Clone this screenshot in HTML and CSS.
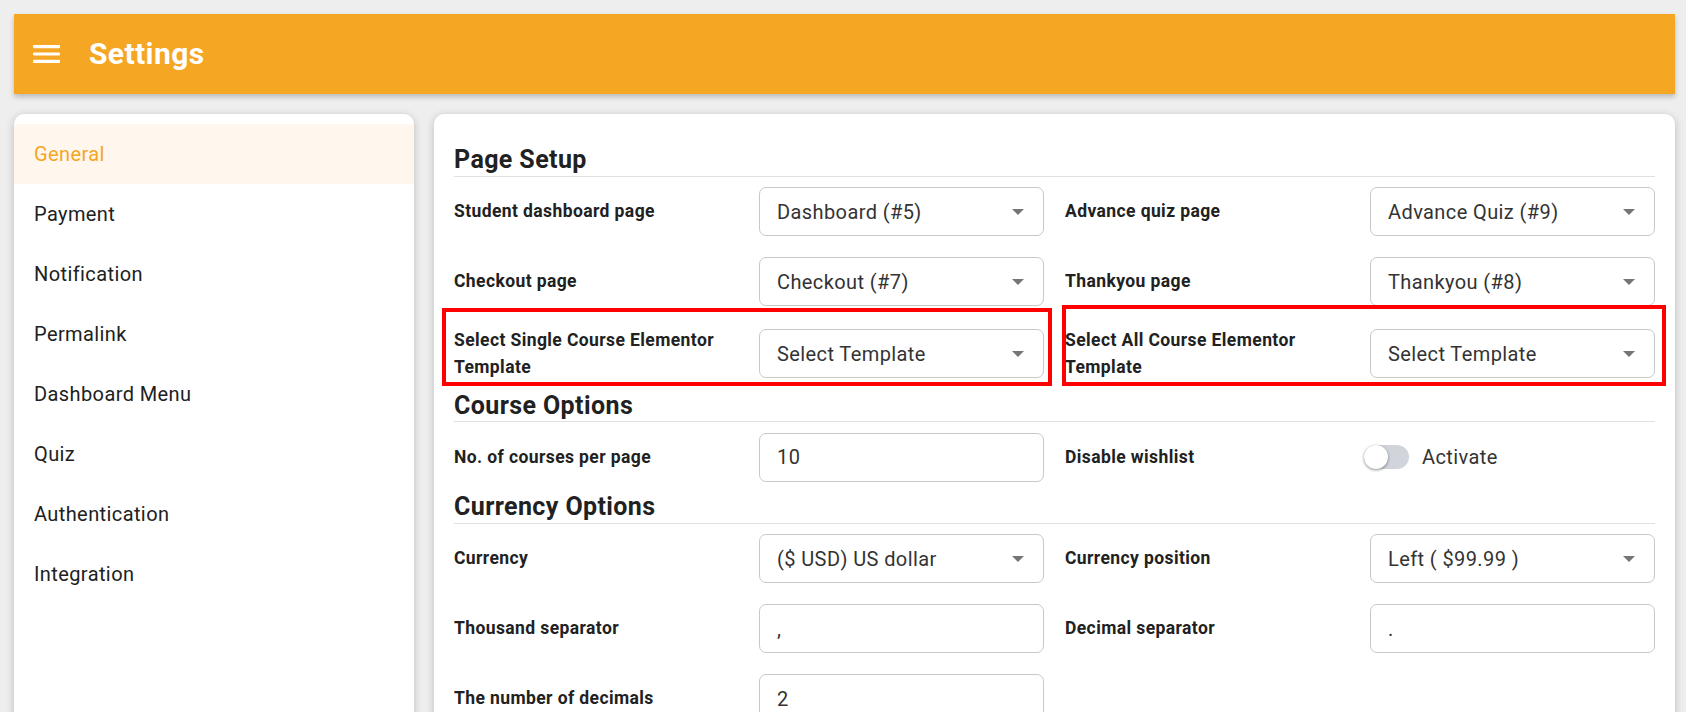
FILE: index.html
```html
<!DOCTYPE html>
<html lang="en">
<head>
<meta charset="utf-8">
<title>Settings</title>
<link rel="stylesheet" href="styles.css">
</head>
<body>
<div class="page">
  <header class="appbar">
    <svg class="menu-icon" viewBox="0 0 27 18" width="27" height="18" aria-hidden="true">
      <rect x="0" y="0" width="27" height="3.2" rx="1" fill="#fff"/>
      <rect x="0" y="7.4" width="27" height="3.2" rx="1" fill="#fff"/>
      <rect x="0" y="14.8" width="27" height="3.2" rx="1" fill="#fff"/>
    </svg>
    <h1 class="title">Settings</h1>
  </header>

  <div class="layout">
    <nav class="sidebar">
      <div class="nav-item active">General</div>
      <div class="nav-item">Payment</div>
      <div class="nav-item">Notification</div>
      <div class="nav-item">Permalink</div>
      <div class="nav-item">Dashboard Menu</div>
      <div class="nav-item">Quiz</div>
      <div class="nav-item">Authentication</div>
      <div class="nav-item">Integration</div>
    </nav>

    <main class="content">
      <h2 class="section-title">Page Setup</h2>
      <div class="grid">
        <div class="field">
          <div class="label">Student dashboard page</div>
          <div class="select"><span>Dashboard (#5)</span><i class="caret"></i></div>
        </div>
        <div class="field">
          <div class="label">Advance quiz page</div>
          <div class="select"><span>Advance Quiz (#9)</span><i class="caret"></i></div>
        </div>
        <div class="field">
          <div class="label">Checkout page</div>
          <div class="select"><span>Checkout (#7)</span><i class="caret"></i></div>
        </div>
        <div class="field">
          <div class="label">Thankyou page</div>
          <div class="select"><span>Thankyou (#8)</span><i class="caret"></i></div>
        </div>
        <div class="field marked marked-left">
          <div class="label">Select Single Course Elementor Template</div>
          <div class="select"><span>Select Template</span><i class="caret"></i></div>
        </div>
        <div class="field marked marked-right">
          <div class="label">Select All Course Elementor Template</div>
          <div class="select"><span>Select Template</span><i class="caret"></i></div>
        </div>
      </div>

      <h2 class="section-title">Course Options</h2>
      <div class="grid">
        <div class="field">
          <div class="label">No. of courses per page</div>
          <div class="input">10</div>
        </div>
        <div class="field">
          <div class="label">Disable wishlist</div>
          <div class="toggle-wrap">
            <span class="toggle"><span class="thumb"></span></span>
            <span class="toggle-text">Activate</span>
          </div>
        </div>
      </div>

      <h2 class="section-title">Currency Options</h2>
      <div class="grid">
        <div class="field">
          <div class="label">Currency</div>
          <div class="select"><span>($ USD) US dollar</span><i class="caret"></i></div>
        </div>
        <div class="field">
          <div class="label">Currency position</div>
          <div class="select"><span>Left ( $99.99 )</span><i class="caret"></i></div>
        </div>
        <div class="field">
          <div class="label">Thousand separator</div>
          <div class="input">,</div>
        </div>
        <div class="field">
          <div class="label">Decimal separator</div>
          <div class="input">.</div>
        </div>
        <div class="field">
          <div class="label">The number of decimals</div>
          <div class="input">2</div>
        </div>
      </div>
    </main>
  </div>
</div>
</body>
</html>
```

FILE: styles.css
```css
* { box-sizing: border-box; }

html, body {
  margin: 0;
  height: 100%;
  overflow: hidden;
}

body {
  background: #eeeeee;
  font-family: Roboto, "Liberation Sans", Arial, sans-serif;
  color: #212121;
  letter-spacing: 0.4px;
}

.page {
  padding: 14px 11px 0 14px;
}

.appbar {
  height: 80px;
  background: #f5a623;
  display: flex;
  align-items: center;
  padding-left: 19px;
  box-shadow: 0 3px 5px rgba(0, 0, 0, 0.22);
}

.menu-icon {
  display: block;
  flex: none;
}

.title {
  margin: 0 0 0 29px;
  font-size: 30px;
  font-weight: 700;
  color: #ffffff;
  line-height: 1;
}

.layout {
  display: flex;
  gap: 20px;
  margin-top: 20px;
}

.sidebar {
  width: 400px;
  flex: none;
  background: #ffffff;
  border-radius: 10px;
  padding-top: 10px;
  min-height: 700px;
  box-shadow: 0 2px 8px rgba(0, 0, 0, 0.22);
}

.nav-item {
  height: 60px;
  display: flex;
  align-items: center;
  padding-left: 20px;
  font-size: 20px;
  color: #212121;
}

.nav-item.active {
  background: #fff7ee;
  color: #f5a623;
}

.content {
  flex: 1;
  background: #ffffff;
  border-radius: 10px;
  padding: 31px 20px 0 20px;
  min-height: 700px;
  box-shadow: 0 2px 8px rgba(0, 0, 0, 0.22);
}

.section-title {
  margin: 0;
  font-size: 25px;
  font-weight: 700;
  line-height: 30.5px;
  color: #212121;
  border-bottom: 1px solid #e0e0e0;
}

.grid {
  display: grid;
  grid-template-columns: 1fr 1fr;
  column-gap: 21px;
}

.field {
  display: flex;
  align-items: center;
  padding: 10.5px 0;
  position: relative;
}

.label {
  width: 305px;
  flex: none;
  font-size: 17.5px;
  font-weight: 700;
  line-height: 26.5px;
  color: #212121;
  padding-right: 30px;
}

.select,
.input {
  width: 285px;
  height: 49px;
  flex: none;
  border: 1px solid #c8c8c8;
  border-radius: 7px;
  padding: 0 19px 0 17px;
  display: flex;
  align-items: center;
  justify-content: space-between;
  font-size: 20px;
  color: #333333;
  background: #ffffff;
}

.caret {
  width: 0;
  height: 0;
  border-left: 6px solid transparent;
  border-right: 6px solid transparent;
  border-top: 6px solid #757575;
}

.toggle-wrap {
  display: flex;
  align-items: center;
  margin-left: -6px;
  height: 49px;
}

.toggle {
  width: 45px;
  height: 24px;
  border-radius: 12px;
  background: #d1d5db;
  position: relative;
  display: block;
}

.thumb {
  position: absolute;
  left: 0;
  top: 0;
  width: 24px;
  height: 24px;
  border-radius: 50%;
  background: #ffffff;
  box-shadow: 0 1px 3px rgba(0, 0, 0, 0.45);
}

.toggle-text {
  margin-left: 13px;
  font-size: 20px;
  color: #333333;
}

.marked::after {
  content: "";
  position: absolute;
  border: 4px solid #ff0000;
  pointer-events: none;
}

.marked-left::after {
  left: -12px;
  right: -8px;
  top: -9px;
  bottom: 5px;
}

.marked-right::after {
  left: -3px;
  right: -11px;
  top: -12px;
  bottom: 5px;
}
```
